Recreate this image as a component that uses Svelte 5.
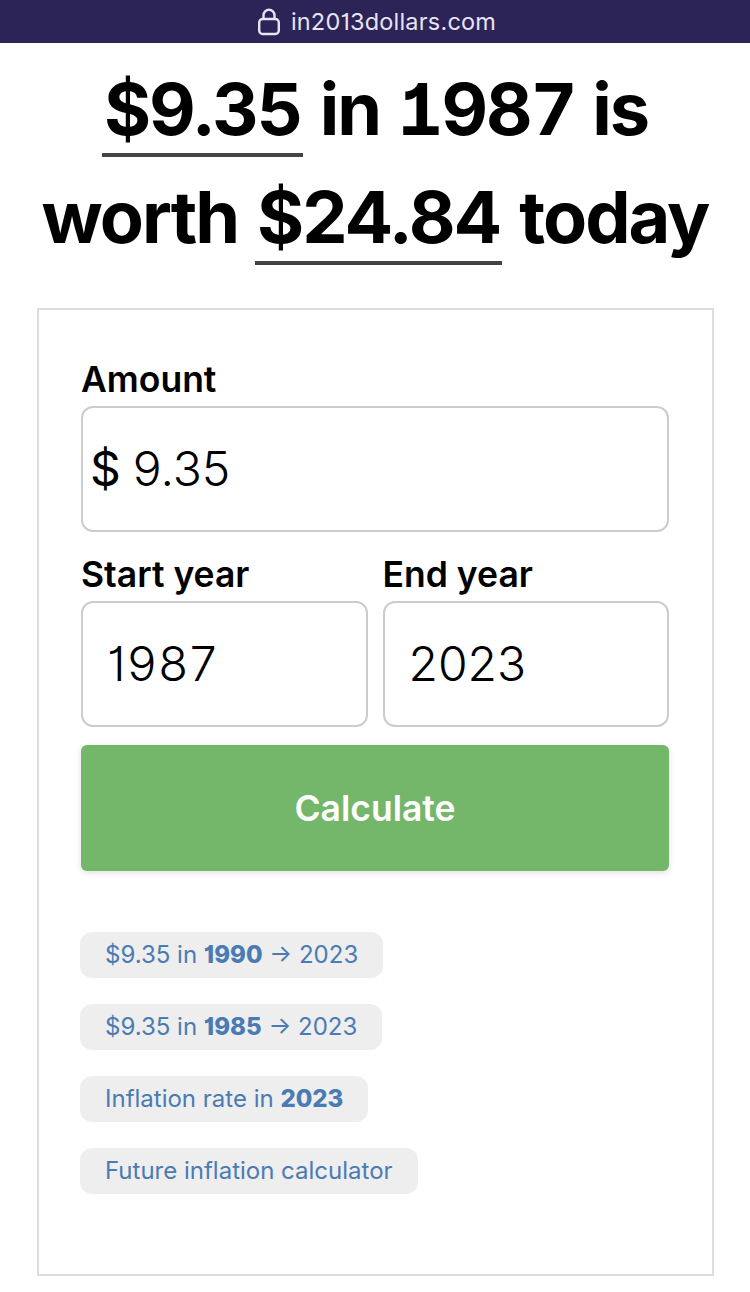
<script>
  let amount = "9.35";
  let startYear = "1987";
  let endYear = "2023";

  const links = [
    { before: "$9.35 in ", bold: "1990", after: " → 2023" },
    { before: "$9.35 in ", bold: "1985", after: " → 2023" },
    { before: "Inflation rate in ", bold: "2023", after: "" },
    { before: "Future inflation calculator", bold: "", after: "" },
  ];
</script>

<div class="urlbar">
  <svg class="lock" width="24" height="28" viewBox="0 0 24 28" fill="none" aria-hidden="true">
    <rect x="2.2" y="11" width="19.6" height="15" rx="3.4" stroke="#e8e4f4" stroke-width="2.4" />
    <path d="M6.5 11V7.2a5.5 5.5 0 0 1 11 0V11" stroke="#e8e4f4" stroke-width="2.4" />
  </svg>
  <span>in2013dollars.com</span>
</div>

<h1>
  <span class="line"><u>$9.35</u> in <span class="year">1987</span> is</span>
  <span class="line">worth <u>$24.84</u> today</span>
</h1>

<main class="card">
  <label class="field">
    <span class="label">Amount</span>
    <div class="input amount">
      <span class="prefix">$</span>
      <input bind:value={amount} />
    </div>
  </label>

  <div class="years">
    <label class="field">
      <span class="label">Start year</span>
      <div class="input">
        <input class="start" bind:value={startYear} />
      </div>
    </label>
    <label class="field">
      <span class="label">End year</span>
      <div class="input">
        <input bind:value={endYear} />
      </div>
    </label>
  </div>

  <button class="calc">Calculate</button>

  <div class="links">
    {#each links as link}
      <a href="#top" class="chip">{link.before}<b>{link.bold}</b>{link.after}</a>
    {/each}
  </div>
</main>

<style>
  :global(body) {
    margin: 0;
    background: #fff;
    font-family: Inter, "Liberation Sans", sans-serif;
    font-feature-settings: "cv01";
    color: #000;
  }

  .urlbar {
    height: 43px;
    background: #2c2357;
    color: #e8e4f4;
    display: flex;
    align-items: center;
    justify-content: center;
    gap: 10px;
    padding-left: 3px;
    font-size: 23.5px;
    letter-spacing: 0.2px;
  }

  h1 {
    margin: 0;
    padding-top: 12px;
    font-size: 72px;
    font-weight: 700;
    line-height: 108px;
    letter-spacing: -2px;
    word-spacing: 2px;
    text-align: center;
    white-space: nowrap;
  }

  .line {
    display: block;
  }

  .year {
    font-variant-numeric: tabular-nums;
  }

  h1 u {
    text-decoration: none;
    display: inline-block;
    line-height: 64px;
    padding: 0 2px 12px;
    border-bottom: 4px solid #444;
  }

  .card {
    box-sizing: border-box;
    width: 677px;
    height: 968px;
    margin: 37px 0 0 37px;
    padding: 50px 43px 0 42px;
    border: 2px solid #ddd;
  }

  .field {
    display: block;
  }

  .label {
    display: block;
    font-size: 35.5px;
    font-weight: 600;
    line-height: 40px;
    margin-bottom: 6px;
  }

  .input {
    box-sizing: border-box;
    height: 126px;
    border: 2px solid #ccc;
    border-radius: 12px;
    display: flex;
    align-items: center;
    padding: 0 0 2px 24px;
    margin-bottom: 18px;
  }

  .input.amount {
    padding-left: 7px;
    gap: 12px;
    margin-bottom: 23px;
  }

  .prefix {
    font-size: 48px;
    font-weight: 400;
  }

  input {
    border: 0;
    outline: 0;
    padding: 0;
    width: 100%;
    min-width: 0;
    background: none;
    font: inherit;
    font-size: 48px;
    font-weight: 300;
    color: #000;
  }

  input.start {
    letter-spacing: 2px;
  }

  .years {
    display: grid;
    grid-template-columns: 1fr 1fr;
    gap: 15px;
  }

  .calc {
    display: block;
    width: 100%;
    height: 126px;
    border: 0;
    border-radius: 6px;
    background: #74b66a;
    color: #fff;
    font: inherit;
    font-size: 35.5px;
    font-weight: 600;
    box-shadow: 0 2px 6px rgba(0, 0, 0, 0.12);
  }

  .links {
    display: flex;
    flex-direction: column;
    align-items: flex-start;
    gap: 26px;
    margin: 61px 0 0 -1px;
  }

  .chip {
    height: 46px;
    line-height: 46px;
    padding: 0 25px;
    border-radius: 12px;
    background: #eeeeef;
    color: #4a7bb3;
    font-size: 24px;
    text-decoration: none;
    white-space: pre;
  }

  .chip b {
    font-weight: 800;
  }
</style>
